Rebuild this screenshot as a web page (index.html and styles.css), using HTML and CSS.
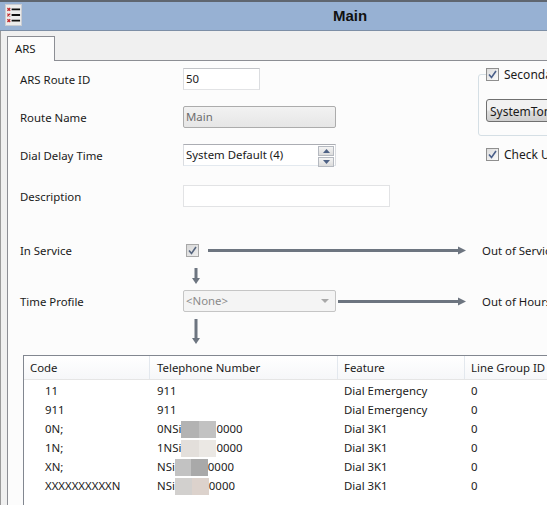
FILE: index.html
```html
<!DOCTYPE html>
<html lang="en">
<head>
  <meta charset="UTF-8" />
  <title>ARS - Main</title>
  <link rel="stylesheet" href="styles.css">
</head>
<body>
  <div class="window">
    <div class="titlebar">
      <span class="app-icon">
        <svg width="16" height="20" viewBox="0 0 16 20">
          <g stroke="#c0282d" stroke-width="1.3">
            <path d="M1.5 2.5l3 3M4.5 2.5l-3 3"/>
            <path d="M1.5 8.5l3 3M4.5 8.5l-3 3"/>
            <path d="M1.5 14.5l3 3M4.5 14.5l-3 3"/>
          </g>
          <g stroke="#111" stroke-width="2">
            <path d="M6 4h9M6 10h9M6 16h9"/>
          </g>
        </svg>
      </span>
      <h1>Main</h1>
    </div>

    <div class="content">
      <div class="tabs">
        <div class="tab">ARS</div>
      </div>

      <div class="panel">
        <div class="top">
          <div class="form">
            <div class="row r1">
              <span class="label">ARS Route ID</span>
              <div class="field field-id">50</div>
            </div>
            <div class="row r2">
              <span class="label">Route Name</span>
              <div class="field field-disabled">Main</div>
            </div>
            <div class="row r3">
              <span class="label">Dial Delay Time</span>
              <div class="field field-spin">
                System Default (4)
                <span class="spin">
                  <span class="spin-btn"><svg width="7" height="4" viewBox="0 0 7 4"><path d="M0 4L3.5 0 7 4z" fill="#4d6185"/></svg></span>
                  <span class="spin-btn"><svg width="7" height="4" viewBox="0 0 7 4"><path d="M0 0h7L3.5 4z" fill="#4d6185"/></svg></span>
                </span>
              </div>
            </div>
            <div class="row r4">
              <span class="label">Description</span>
              <div class="field field-desc"></div>
            </div>
          </div>

          <div class="side">
            <fieldset class="group">
              <legend><span class="check"><svg width="9" height="9" viewBox="0 0 9 9"><path d="M1 4.5l2.5 3L8 1" fill="none" stroke="#4a5f8a" stroke-width="1.6"/></svg></span>Secondary Dial Tone</legend>
              <div class="btn">SystemTone</div>
            </fieldset>
            <div class="check-row"><span class="check"><svg width="9" height="9" viewBox="0 0 9 9"><path d="M1 4.5l2.5 3L8 1" fill="none" stroke="#4a5f8a" stroke-width="1.6"/></svg></span>Check User Call Barring</div>
          </div>
        </div>

        <div class="flow">
          <div class="row r5">
            <span class="label">In Service</span>
            <span class="cell-check"><span class="check check-disabled"><svg width="9" height="9" viewBox="0 0 9 9"><path d="M1 4.5l2.5 3L8 1" fill="none" stroke="#56657e" stroke-width="1.6"/></svg></span></span>
            <svg class="arrow-right a1" width="258" height="9" viewBox="0 0 258 9"><path d="M0 4.5h252" stroke="#6d7580" stroke-width="3"/><path d="M250 0.5l8 4-8 4z" fill="#6d7580"/></svg>
            <span class="outcome">Out of Service</span>
          </div>
          <svg class="arrow-down d1" width="8" height="16" viewBox="0 0 8 16"><path d="M4 0v11" stroke="#6d7580" stroke-width="3"/><path d="M0 10h8l-4 6z" fill="#6d7580"/></svg>
          <div class="row r6">
            <span class="label">Time Profile</span>
            <div class="field field-select">&lt;None&gt;<svg class="caret" width="8" height="4" viewBox="0 0 8 4"><path d="M0 0h8L4 4z" fill="#a8a8a8"/></svg></div>
            <svg class="arrow-right a2" width="128" height="9" viewBox="0 0 128 9"><path d="M0 4.5h122" stroke="#6d7580" stroke-width="3"/><path d="M120 0.5l8 4-8 4z" fill="#6d7580"/></svg>
            <span class="outcome">Out of Hours Route</span>
          </div>
          <svg class="arrow-down d2" width="8" height="25" viewBox="0 0 8 25"><path d="M4 0v20" stroke="#6d7580" stroke-width="3"/><path d="M0 19h8l-4 6z" fill="#6d7580"/></svg>
        </div>

        <div class="list">
          <div class="list-head">
            <div class="col c-code">Code</div>
            <div class="col c-tel">Telephone Number</div>
            <div class="col c-feat">Feature</div>
            <div class="col c-lg">Line Group ID</div>
          </div>
          <div class="list-row">
            <div class="col c-code">11</div>
            <div class="col c-tel">911</div>
            <div class="col c-feat">Dial Emergency</div>
            <div class="col c-lg">0</div>
          </div>
          <div class="list-row">
            <div class="col c-code">911</div>
            <div class="col c-tel">911</div>
            <div class="col c-feat">Dial Emergency</div>
            <div class="col c-lg">0</div>
          </div>
          <div class="list-row">
            <div class="col c-code">0N;</div>
            <div class="col c-tel">0NSi<span class="blur blur-dark"></span>0000</div>
            <div class="col c-feat">Dial 3K1</div>
            <div class="col c-lg">0</div>
          </div>
          <div class="list-row">
            <div class="col c-code">1N;</div>
            <div class="col c-tel">1NSi<span class="blur blur-light"></span>0000</div>
            <div class="col c-feat">Dial 3K1</div>
            <div class="col c-lg">0</div>
          </div>
          <div class="list-row">
            <div class="col c-code">XN;</div>
            <div class="col c-tel">NSi<span class="blur blur-mid"></span>0000</div>
            <div class="col c-feat">Dial 3K1</div>
            <div class="col c-lg">0</div>
          </div>
          <div class="list-row">
            <div class="col c-code">XXXXXXXXXXN</div>
            <div class="col c-tel">NSi<span class="blur blur-warm"></span>0000</div>
            <div class="col c-feat">Dial 3K1</div>
            <div class="col c-lg">0</div>
          </div>
        </div>
      </div>
    </div>
  </div>
</body>
</html>
```

FILE: styles.css
```css
html, body {
  margin: 0;
  padding: 0;
}

body {
  width: 547px;
  height: 505px;
  overflow: hidden;
  background: #f0f0f0;
  font-family: "Noto Sans", "Open Sans", sans-serif;
  font-size: 11.4px;
  color: #1a1a1a;
}

.window {
  width: 547px;
  height: 505px;
  overflow: hidden;
}

.titlebar {
  position: relative;
  height: 28px;
  border-top: 2px solid #5f6670;
  background: #97b1d3;
  border-bottom: 1px solid #7d8fa6;
}

.app-icon {
  position: absolute;
  left: 5px;
  top: 2px;
  width: 17px;
  height: 22px;
  background: #ececec;
  border: 1px solid #c9ccd2;
  box-sizing: border-box;
  display: flex;
  align-items: center;
  justify-content: center;
}

.titlebar h1 {
  margin: 0;
  font-family: "Liberation Sans", Arial, sans-serif;
  font-size: 15px;
  font-weight: bold;
  color: #111;
  line-height: 28px;
  padding-left: 333px;
}

.content {
  padding-left: 2px;
  border-left: 1px solid #9a9a9a;
  padding-top: 5px;
}

.tabs {
  display: flex;
  padding-left: 4px;
  height: 25px;
  position: relative;
  z-index: 1;
}

.tab {
  width: 48px;
  height: 25px;
  box-sizing: border-box;
  border: 1px solid #8c8e94;
  border-bottom: none;
  background: #fcfcfc;
  padding: 4px 0 0 7px;
}

.panel {
  margin-left: 4px;
  margin-top: -1px;
  width: 700px;
  height: 460px;
  border: 1px solid #8c8e94;
  background: #fcfcfc;
  padding: 7px 0 0 12px;
}

.top {
  display: grid;
  grid-template-columns: 458px 230px;
}

.row {
  display: flex;
  align-items: center;
  height: 22px;
}

.label {
  width: 163px;
  flex-shrink: 0;
}

.r2, .r3 {
  margin-top: 16px;
}

.r4 {
  margin-top: 19px;
}

.field {
  height: 22px;
  box-sizing: border-box;
  border: 1px solid #c4c7cc;
  background: #fff;
  padding: 2px 0 0 2px;
  position: relative;
}

.field-id {
  width: 77px;
  border-color: #c2c4c8 #dbdde0 #e2e3e5 #dbdde0;
}

.field-disabled {
  width: 153px;
  background: linear-gradient(#f2f2f2, #e6e6e6);
  border-color: #acacac;
  border-radius: 2px;
  color: #6d6d6d;
}

.field-spin {
  width: 153px;
  border-color: #abadb3 #dadce0 #e3e9ef #dadce0;
}

.spin {
  position: absolute;
  right: 1px;
  top: 1px;
  display: flex;
  flex-direction: column;
  gap: 1px;
}

.spin-btn {
  width: 14px;
  height: 8px;
  border: 1px solid #b5b9c0;
  background: linear-gradient(#f4f4f4, #dcdcdc);
  box-sizing: content-box;
  display: flex;
  align-items: center;
  justify-content: center;
}

.field-desc {
  width: 207px;
  border-color: #e2e3e5;
}

.side {
  margin-top: -2px;
}

.group {
  margin: 0;
  padding: 16px 0 13px 7px;
  border: 1px solid #d5dfe5;
  border-radius: 3px;
  width: 200px;
}

.group legend {
  padding: 0 3px 0 0;
  display: flex;
  align-items: center;
  white-space: nowrap;
  font-size: 12px;
}

.check {
  display: inline-flex;
  align-items: center;
  justify-content: center;
  width: 13px;
  height: 13px;
  box-sizing: border-box;
  border: 1px solid #8f8f8f;
  background: linear-gradient(135deg, #dcdcdc, #fbfbfb);
  margin-right: 5px;
}

.check-disabled {
  background: linear-gradient(135deg, #d8d8d8, #eeeeee);
  border-color: #a8a8a8;
}

.btn {
  width: 185px;
  height: 23px;
  box-sizing: border-box;
  border: 1px solid #707070;
  border-radius: 3px;
  background: linear-gradient(#f2f2f2 45%, #dddddd 55%, #cfcfcf);
  padding: 3px 0 0 3px;
  white-space: nowrap;
  font-size: 12px;
}

.check-row {
  display: flex;
  align-items: center;
  margin: 10px 0 0 8px;
  white-space: nowrap;
  font-size: 12px;
}

.flow {
  padding-top: 32px;
}

.cell-check {
  width: 25px;
  flex-shrink: 0;
  display: flex;
  padding-left: 3px;
  box-sizing: border-box;
}

.cell-check .check {
  margin-right: 0;
}

.arrow-right {
  flex-shrink: 0;
  margin-right: 16px;
}

.arrow-down {
  display: block;
  margin-left: 172px;
}

.d1 {
  margin-top: 7px;
  margin-bottom: 6px;
}

.field-select {
  width: 153px;
  background: #f4f4f4;
  border-color: #c5c5c5;
  border-radius: 2px;
  color: #8a8a8a;
  margin-right: 2px;
}

.caret {
  position: absolute;
  right: 6px;
  top: 8px;
}

.d2 {
  margin-top: 7px;
}

.list {
  margin: 11px 0 0 3px;
  border: 1px solid #828790;
  background: #fff;
  height: 200px;
}

.list-head {
  display: flex;
  height: 23px;
  border-bottom: 1px solid #e5e5e5;
  background: linear-gradient(#fff, #f6f7f9);
}

.list-head .col {
  border-right: 1px solid #e3e8ee;
  line-height: 23px;
}

.list-row {
  display: flex;
  height: 19px;
  line-height: 19px;
}

.list-head + .list-row {
  margin-top: 1px;
}

.col {
  flex-shrink: 0;
  box-sizing: border-box;
  white-space: nowrap;
}

.c-code {
  width: 126px;
  padding-left: 6px;
}

.list-row .c-code {
  padding-left: 21px;
}

.c-tel {
  width: 188px;
  padding-left: 7px;
}

.c-feat {
  width: 127px;
  padding-left: 6px;
}

.c-lg {
  width: 150px;
  padding-left: 6px;
}

.blur {
  display: inline-block;
  width: 35px;
  height: 17px;
  vertical-align: middle;
}

.blur-dark {
  background: linear-gradient(90deg, #b3b3b3 50%, #c2c2c2 50%);
}

.blur-light {
  background: linear-gradient(90deg, #e3dfdb 50%, #ebe8e4 50%);
}

.blur-mid {
  background: linear-gradient(90deg, #c2c2c2 50%, #a9a9a9 50%);
  width: 33px;
}

.blur-warm {
  background: linear-gradient(90deg, #d2d0ce 50%, #dcd2cc 50%);
  width: 34px;
}
```
